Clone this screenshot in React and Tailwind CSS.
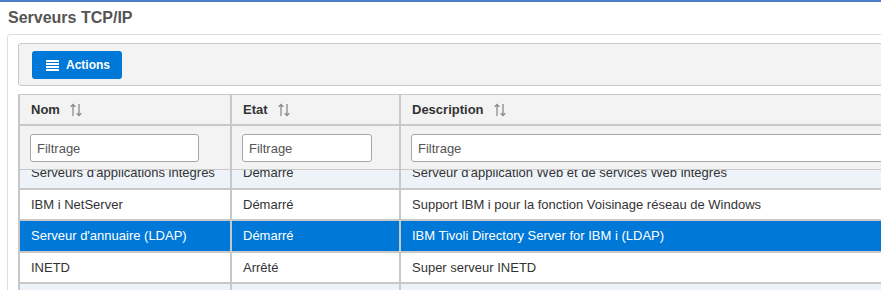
import React from 'react'

const ROWS = [
  {
    nom: "Serveurs d'applications intégrés",
    etat: 'Démarré',
    desc: "Serveur d'application Web et de services Web intégrés"
  },
  {
    nom: 'IBM i NetServer',
    etat: 'Démarré',
    desc: 'Support IBM i pour la fonction Voisinage réseau de Windows'
  },
  {
    nom: "Serveur d'annuaire (LDAP)",
    etat: 'Démarré',
    desc: 'IBM Tivoli Directory Server for IBM i (LDAP)',
    selected: true
  },
  { nom: 'INETD', etat: 'Arrêté', desc: 'Super serveur INETD' },
  { nom: 'Serveur de gestion', etat: 'Démarré', desc: 'Serveur de gestion IBM i' }
]

function SortIcon() {
  return (
    <svg width="12" height="14" viewBox="0 0 12 14" fill="none" stroke="#8a8a8a" strokeWidth="1.3">
      <path d="M3 13V1.5M0.6 3.9L3 1.5l2.4 2.4" />
      <path d="M9 1v11.5M6.6 10.1L9 12.5l2.4-2.4" />
    </svg>
  )
}

function BarsIcon() {
  return (
    <svg width="13" height="11" viewBox="0 0 13 11" fill="#ffffff">
      <rect x="0" y="0" width="13" height="2" />
      <rect x="0" y="3" width="13" height="2" />
      <rect x="0" y="6" width="13" height="2" />
      <rect x="0" y="9" width="13" height="2" />
    </svg>
  )
}

function HeaderCell({ label, className }) {
  return (
    <div className={`flex items-center gap-[10px] px-[11px] h-full border-r-2 border-[#c8c8c8] ${className}`}>
      <span className="font-bold text-[13px] text-[#333]">{label}</span>
      <SortIcon />
    </div>
  )
}

function FilterCell({ inputWidth, className }) {
  return (
    <div className={`flex items-start pt-[8px] px-[10px] h-full border-r-2 border-[#c8c8c8] overflow-hidden ${className}`}>
      <input
        type="text"
        placeholder="Filtrage"
        className={`h-[28px] ${inputWidth} shrink-0 rounded-[3px] border border-[#a6a6a6] bg-white px-[6px] text-[13px] text-[#333] placeholder:text-[#555] outline-none`}
      />
    </div>
  )
}

export default function App() {
  return (
    <div className="w-[881px] h-[290px] overflow-hidden bg-white font-['Liberation_Sans',Arial,sans-serif]">
      <div className="h-[2px] bg-[#4a7cc7]" />
      <h1 className="pl-[8px] pt-[6px] text-[16px] leading-[20px] font-bold text-[#555]">
        Serveurs TCP/IP
      </h1>

      <div className="mt-[6px] ml-[7px] w-[1000px] h-[300px] rounded-[3px] border border-[#dedede] bg-white pl-[10px] pt-[8px]">
        <div className="flex items-start h-[43px] rounded-[3px] border border-[#c8c8c8] bg-[#f3f3f3] pl-[13px] pt-[7px]">
          <button
            type="button"
            className="flex items-center gap-[7px] h-[28px] w-[90px] rounded-[3px] bg-[#0078d7] pl-[14px] text-[12px] font-bold text-white"
          >
            <BarsIcon />
            Actions
          </button>
        </div>

        <div className="mt-[8px] border-l-2 border-t border-[#c8c8c8]">
          <div className="flex h-[31px] border-b-2 border-[#c8c8c8] bg-[#f3f3f3]">
            <HeaderCell label="Nom" className="w-[212px] shrink-0" />
            <HeaderCell label="Etat" className="w-[169px] shrink-0" />
            <HeaderCell label="Description" className="flex-1 min-w-0" />
          </div>

          <div className="flex h-[44px] border-b border-[#c8c8c8] bg-[#f3f3f3]">
            <FilterCell inputWidth="w-[169px]" className="w-[212px] shrink-0" />
            <FilterCell inputWidth="w-[130px]" className="w-[169px] shrink-0" />
            <FilterCell inputWidth="w-[600px]" className="flex-1 min-w-0" />
          </div>

          <div className="h-[130px] overflow-hidden">
            <div className="-mt-[12px]">
              {ROWS.map((row, index) => {
                const bg = row.selected
                  ? 'bg-[#0078d7] text-white'
                  : index % 2 === 0
                    ? 'bg-[#eef3f9] text-[#333]'
                    : 'bg-white text-[#333]'
                return (
                  <div key={row.nom} className={`flex h-[31.5px] border-b-2 border-[#c8c8c8] text-[13px] ${bg}`}>
                    <div className="flex items-center w-[212px] shrink-0 px-[11px] border-r-2 border-[#c8c8c8] whitespace-nowrap overflow-hidden">
                      {row.nom}
                    </div>
                    <div className="flex items-center w-[169px] shrink-0 px-[11px] border-r-2 border-[#c8c8c8] whitespace-nowrap">
                      {row.etat}
                    </div>
                    <div className="flex items-center flex-1 min-w-0 px-[11px] border-r-2 border-[#c8c8c8] whitespace-nowrap">
                      {row.desc}
                    </div>
                  </div>
                )
              })}
            </div>
          </div>
        </div>
      </div>
    </div>
  )
}
